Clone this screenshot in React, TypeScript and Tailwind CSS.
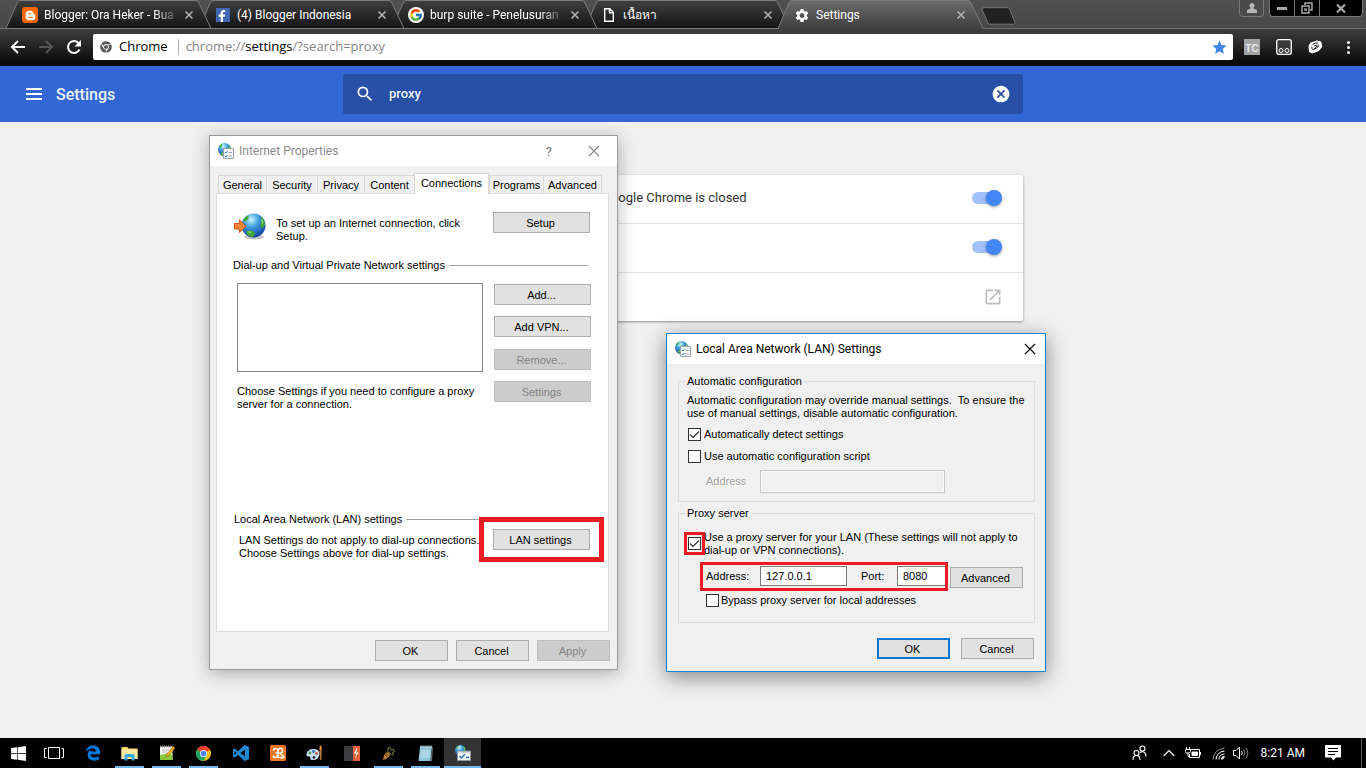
import type { ReactNode } from "react";
import { FaBloggerB, FaChrome, FaEdgeLegacy, FaFacebookF, FaWindows } from "react-icons/fa";
import { FcGoogle } from "react-icons/fc";
import { MdCancel, MdOpenInNew, MdSearch, MdSettings, MdStar } from "react-icons/md";
import { SiXampp } from "react-icons/si";

const uiFont = "font-['Liberation_Sans',Arial,sans-serif]";
const titleFont = "font-['Roboto','Noto_Sans',sans-serif]";

/* ---------- browser tabs ---------- */

function CloseGlyph() {
  return (
    <svg width="8" height="8" viewBox="0 0 8 8" stroke="#b4b4b4" strokeWidth="1.500">
      <path d="M.5 .5l7 7M7.500 .5l-7 7" />
    </svg>
  );
}

type TabProps = { icon: ReactNode; title: string; active?: boolean; order: string; fade?: boolean };

function BrowserTab({ icon, title, active, order, fade }: TabProps) {
  return (
    <div className={`relative flex h-7 w-[205px] shrink-0 items-center pt-0.5 pl-4 -mr-3 ${order}`}>
      <svg className="absolute inset-0" width="205" height="29" viewBox="0 0 205 29">
        <defs>
          <linearGradient id="tabIdle" x1="0" y1="0" x2="0" y2="1">
            <stop offset="0" stopColor="#404040" />
            <stop offset="1" stopColor="#131313" />
          </linearGradient>
          <linearGradient id="tabActive" x1="0" y1="0" x2="0" y2="1">
            <stop offset="0" stopColor="#6c6c6c" />
            <stop offset="1" stopColor="#3e3e3e" />
          </linearGradient>
        </defs>
        <path d="M0 29L11 3Q12 .5 14 .5H190Q192 .5 193 3L205 29Z" fill={active ? "url(#tabActive)" : "url(#tabIdle)"} />
        <path
          d={active ? "M0 28.5L11 3Q12 .5 14 .5H190Q192 .5 193 3L205 28.5" : "M0 28.5L11 3Q12 .5 14 .5H190Q192 .5 193 3L205 28.5Z"}
          fill="none"
          stroke="#7d7d7d"
        />
      </svg>
      <span className="relative flex w-4 shrink-0 justify-center">{icon}</span>
      <span
        className={`relative ml-1.5 w-[137px] overflow-hidden whitespace-nowrap text-xs text-white ${titleFont} ${
          fade ? "[mask-image:linear-gradient(to_right,black_80%,transparent)]" : ""
        }`}
      >
        {title}
      </span>
      <button aria-label={`Close ${title}`} className="relative ml-1">
        <CloseGlyph />
      </button>
    </div>
  );
}

function TabStrip() {
  return (
    <div className="flex h-7 items-start bg-gradient-to-b from-[#505050] to-[#484848] pl-1.5">
      <BrowserTab
        order="z-40"
        fade
        title="Blogger: Ora Heker - Bua"
        icon={
          <span className="flex size-4 items-center justify-center rounded-[3px] bg-[#ff6600] text-white">
            <FaBloggerB size={11} />
          </span>
        }
      />
      <BrowserTab
        order="z-30"
        title="(4) Blogger Indonesia"
        icon={
          <span className="flex size-3.5 items-end justify-end bg-[#4267b2] pr-0.5 text-white">
            <FaFacebookF size={12} />
          </span>
        }
      />
      <BrowserTab
        order="z-20"
        fade
        title="burp suite - Penelusuran"
        icon={
          <span className="flex size-4 items-center justify-center rounded-full bg-white">
            <FcGoogle size={14} />
          </span>
        }
      />
      <BrowserTab
        order="z-10"
        title="เนื้อหา"
        icon={
          <svg width="10" height="14" viewBox="0 0 10 14" fill="none" stroke="white" strokeWidth="1.4">
            <path d="M.7.7h5l3.6 3.6v9H.7zM5.5.7v4h3.8" />
          </svg>
        }
      />
      <BrowserTab order="z-50" active title="Settings" icon={<MdSettings size={17} className="text-white" />} />
      <button aria-label="New tab" className="relative mt-[7px] ml-2.5">
        <svg width="35" height="18" viewBox="0 0 35 18">
          <path d="M3 .7H26.500Q28 .7 28.600 2L34 15.500Q34.300 17.200 32.500 17.200H9Q7.500 17.200 7 16L1 2.500Q.7 .7 3 .7Z" fill="#222" stroke="#757575" />
        </svg>
      </button>
      <div className="mr-[3px] ml-auto flex items-start gap-[5px]">
        <button aria-label="Profile" className="flex h-[17px] w-[25px] items-center justify-center rounded-b border border-t-0 border-[#777] bg-[#4a4a4a]">
          <svg width="10" height="10" viewBox="0 0 10 10" fill="#b5b5b5">
            <path d="M5 0a2.500 2.500 0 0 1 1.500 4.500V5.500L10 7v3H0V7l3.500-1.500v-1A2.500 2.500 0 0 1 5 0z" />
          </svg>
        </button>
        <div className="flex h-[17px] divide-x divide-[#777] rounded-b border border-t-0 border-[#777] bg-black text-[#a8a8a8]">
          <button aria-label="Minimize" className="flex w-[25px] items-center justify-center">
            <span className="h-[3px] w-2.5 bg-[#a8a8a8]" />
          </button>
          <button aria-label="Restore" className="flex w-[25px] items-center justify-center">
            <svg width="12" height="12" viewBox="0 0 12 12" fill="none" stroke="#a8a8a8" strokeWidth="1.500">
              <path d="M4 3V1h7v7H9" />
              <path d="M1 4h7v7H1zM4 7h1v1H4z" />
            </svg>
          </button>
          <button aria-label="Close window" className="flex w-[42px] items-center justify-center">
            <svg width="10" height="9" viewBox="0 0 10 9" stroke="#a8a8a8" strokeWidth="2.200">
              <path d="M1 .5l8 8M9 .5l-8 8" />
            </svg>
          </button>
        </div>
      </div>
    </div>
  );
}

function Toolbar() {
  return (
    <div className="flex h-[38px] items-start border-t border-[#6e6e6e] bg-gradient-to-b from-[#3f3f3f] via-[#222] via-50% to-[#060606] pt-[5px] pl-2.5">
      <div className="flex h-[26px] w-[83px] items-center gap-3 text-white">
        <button aria-label="Back">
          <svg width="16" height="14" viewBox="0 0 16 14" fill="none" stroke="white" strokeWidth="2">
            <path d="M15 7H2.500M8 1L2 7l6 6" />
          </svg>
        </button>
        <button aria-label="Forward">
          <svg width="16" height="14" viewBox="0 0 16 14" fill="none" stroke="#555" strokeWidth="2">
            <path d="M1 7h12.500M8 1l6 6-6 6" />
          </svg>
        </button>
        <button aria-label="Reload">
          <svg width="16" height="16" viewBox="0 0 16 16">
            <path d="M13.500 10.500A6 6 0 1 1 12.500 4" fill="none" stroke="white" strokeWidth="2" />
            <path d="M15 1v6.500H8.500z" fill="white" />
          </svg>
        </button>
      </div>
      <div className="flex h-[26px] flex-1 items-center rounded-[2px] bg-white pr-[5px] pl-[7px] text-[13px] font-['Open_Sans','Noto_Sans',sans-serif]">
        <FaChrome size={12} className="text-[#5a5a5a]" />
        <span className="ml-[7px] text-black">Chrome</span>
        <span className="mr-[7px] ml-2.5 h-4 w-px bg-[#aaa]" />
        <span className="flex-1 text-[#858585]">
          chrome://<span className="text-black">settings</span>/?search=proxy
        </span>
        <button aria-label="Bookmark">
          <MdStar size={17} className="text-[#4285f4]" />
        </button>
      </div>
      <div className="flex h-[26px] w-[133px] items-center pl-[11px]">
        <button aria-label="TC extension" className="flex h-4 w-4 items-end justify-center bg-[#a3a3a3] text-[10px] leading-3 font-bold text-[#e6e6e6] font-['Liberation_Sans',sans-serif]">
          TC
        </button>
        <button aria-label="Panel extension" className="ml-4">
          <svg width="16" height="16" viewBox="0 0 16 16" fill="none" stroke="white">
            <rect x=".7" y=".7" width="14.600" height="14.600" rx="2" fill="#3a3a3a" strokeWidth="1.300" />
            <circle cx="5" cy="11.500" r="2" />
            <circle cx="11" cy="11.500" r="2" />
          </svg>
        </button>
        <button aria-label="Cookie extension" className="ml-4">
          <svg width="15" height="14" viewBox="0 0 15 14">
            <path d="M2.500 2.500L9 .5l4 1 1.500 5L11 11l-6.500 2.500L1 12 .5 6z" fill="white" />
            <path d="M4.500 4.500Q7 2.500 10 3M10.500 5L6 9M4 6.500Q3 9 5 9.500 9 9 11 5.500M6 6l3-1" fill="none" stroke="#222" />
          </svg>
        </button>
        <button aria-label="Menu" className="ml-6 flex flex-col gap-0.5">
          <span className="size-[3px] rounded-full bg-white" />
          <span className="size-[3px] rounded-full bg-white" />
          <span className="size-[3px] rounded-full bg-white" />
        </button>
      </div>
    </div>
  );
}

/* ---------- settings page ---------- */

function SettingsHeader() {
  return (
    <header className="grid h-14 grid-cols-[1fr_680px_1fr] items-center bg-[#3367d6] font-['Roboto',sans-serif] text-white">
      <div className="flex items-center pl-[26px]">
        <button aria-label="Main menu">
          <svg width="16" height="12" viewBox="0 0 16 12" stroke="white" strokeWidth="2">
            <path d="M0 1h16M0 6h16M0 11h16" />
          </svg>
        </button>
        <h1 className="ml-3.5 pt-0.5 text-base font-medium text-white/90">Settings</h1>
      </div>
      <div className="flex h-10 items-center rounded-[2px] bg-[#2850a7] pr-3 pl-3">
        <MdSearch size={20} />
        <input aria-label="Search settings" defaultValue="proxy" className="ml-3.5 flex-1 bg-transparent text-[13px] font-medium text-white/95 outline-none" />
        <button aria-label="Clear search">
          <MdCancel size={20} />
        </button>
      </div>
    </header>
  );
}

function ToggleRow({ id, label }: { id: string; label: string }) {
  return (
    <div className="flex h-[49px] items-center justify-between border-b border-[#e4e4e4] pr-[21px] pb-0.5 pl-5">
      <label htmlFor={id}>{label}</label>
      <span className="relative flex h-4 w-[30px] items-center">
        <input id={id} type="checkbox" role="switch" defaultChecked className="h-3 w-7 appearance-none rounded-full bg-[#a0c1fa]" />
        <span className="pointer-events-none absolute right-0 size-4 rounded-full bg-[#4285f4] shadow-[0_1px_3px_rgba(0,0,0,0.4)]" />
      </span>
    </div>
  );
}

function SystemCard() {
  return (
    <section className="mx-auto w-[680px] rounded-[2px] bg-white text-[13px] text-[#333] shadow-[0_1px_3px_rgba(0,0,0,0.4)] font-['Roboto',sans-serif]">
      <ToggleRow id="background-apps" label="Continue running background apps when Google Chrome is closed" />
      <ToggleRow id="hardware-accel" label="Use hardware acceleration when available" />
      <div className="flex h-12 items-center justify-between pr-5 pl-5">
        <span>Open proxy settings</span>
        <button aria-label="Open proxy settings">
          <MdOpenInNew size={20} className="text-[#bdbdbd]" />
        </button>
      </div>
    </section>
  );
}

/* ---------- dialogs ---------- */

function Globe({ id }: { id: string }) {
  return (
    <g>
      <radialGradient id={id} cx=".4" cy=".25" r=".8">
        <stop offset="0" stopColor="#c8f1fb" />
        <stop offset=".4" stopColor="#3f9fdc" />
        <stop offset="1" stopColor="#12379c" />
      </radialGradient>
      <circle cx="12" cy="12" r="12" fill={`url(#${id})`} />
      <path d="M2 7Q3 3 7 2L7 5 4 8zM19 3q4 3 4.500 8L21 15l-2-3 1-4zM5 18l5-1 4 3-3 3.500Q7 23 5 20z" fill="#43a832" />
      <path d="M20 5l2 4-1 2-1-3zM6 18l4 0-1 2z" fill="#93dc5a" />
    </g>
  );
}

function InternetIcon({ id }: { id: string }) {
  return (
    <svg width="16" height="16" viewBox="0 0 16 16">
      <g transform="scale(.55)">
        <Globe id={id} />
      </g>
      <rect x="5.500" y="5.500" width="10" height="10" rx=".5" fill="#f4f6f8" stroke="#9aa4ad" />
      <path d="M7 9l1 1 1.500-2M7 13l1 1 1.500-2" fill="none" stroke="#2787c9" />
      <path d="M10.500 9.500h3.500M10.500 13h3.500" stroke="#9aa4ad" />
    </svg>
  );
}

function ConnectionIcon() {
  return (
    <svg width="32" height="27" viewBox="0 0 32 27" className="mt-px">
      <ellipse cx="20" cy="24" rx="10" ry="2.500" fill="#c9c9c9" />
      <g transform="translate(7.500 .5)">
        <Globe id="globeLarge" />
      </g>
      <path d="M.5 10.500H5.500V7L12 13 5.500 19.500V16H.5z" fill="#f58634" stroke="#c8551b" />
    </svg>
  );
}

function CloseIcon({ color }: { color: string }) {
  return (
    <svg width="12" height="12" viewBox="0 0 12 12" stroke={color} strokeWidth="1.100">
      <path d="M1 1l10 10M11 1L1 11" />
    </svg>
  );
}

type WinButtonProps = { children: ReactNode; width: string; disabled?: boolean; primary?: boolean };

function WinButton({ children, width, disabled, primary }: WinButtonProps) {
  const look = disabled
    ? "border border-[#bfbfbf] bg-[#cccccc] text-[#838383]"
    : primary
      ? "border-2 border-[#0078d7] bg-[#e1e1e1] text-black"
      : "border border-[#adadad] bg-[#e1e1e1] text-black";
  return (
    <button disabled={disabled} className={`flex h-[21px] shrink-0 items-center justify-center pt-0.5 pr-0.5 leading-[13px] ${width} ${look}`}>
      {children}
    </button>
  );
}

function Checkbox({ id, checked }: { id: string; checked?: boolean }) {
  return (
    <span className="grid size-[13px] shrink-0 place-items-center">
      <input
        id={id}
        type="checkbox"
        defaultChecked={checked}
        className="peer col-start-1 row-start-1 size-[13px] appearance-none border border-[#333] bg-white"
      />
      <svg
        className="pointer-events-none invisible col-start-1 row-start-1 peer-checked:visible"
        width="11"
        height="11"
        viewBox="0 0 11 11"
        fill="none"
        stroke="#333"
        strokeWidth="1.200"
      >
        <path d="M1 5.500L4 8.500L10 2.500" />
      </svg>
    </span>
  );
}

function Marker({ className }: { className: string }) {
  return <span aria-hidden="true" className={`pointer-events-none absolute border-[#ed1c24] ${className}`} />;
}

const propertyTabs = [
  { name: "General", width: "w-12" },
  { name: "Security", width: "w-[51px]" },
  { name: "Privacy", width: "w-[47px]" },
  { name: "Content", width: "w-[50px]" },
  { name: "Connections", width: "w-[75px]" },
  { name: "Programs", width: "w-[54px]" },
  { name: "Advanced", width: "w-[59px]" },
];

function InternetProperties() {
  return (
    <div
      role="dialog"
      aria-label="Internet Properties"
      className={`absolute top-[135px] left-[209px] w-[409px] border border-[#9a9a9a] bg-[#f0f0f0] text-[11px] leading-[13px] text-black shadow-[0_3px_16px_rgba(0,0,0,0.3)] ${uiFont}`}
    >
      <div className="flex h-[30px] items-center bg-white pr-[17px] pl-2">
        <InternetIcon id="globeA" />
        <span className={`ml-[5px] flex-1 text-xs text-[#8c8c8c] ${titleFont}`}>Internet Properties</span>
        <button aria-label="Help" className={`mr-9 text-[13px] text-[#777] ${titleFont}`}>
          ?
        </button>
        <button aria-label="Close">
          <CloseIcon color="#888" />
        </button>
      </div>
      <div role="tablist" className="flex h-[27px] items-end pl-2">
        {propertyTabs.map((tab) => {
          const active = tab.name === "Connections";
          return (
            <button
              key={tab.name}
              role="tab"
              aria-selected={active}
              className={`flex items-center justify-center whitespace-nowrap border-t border-l border-[#d9d9d9] last:border-r ${tab.width} ${
                active ? "relative z-10 -mb-px h-[21px] border-r bg-white pb-0.5" : "h-[18px] pt-0.5"
              }`}
            >
              {tab.name}
            </button>
          );
        })}
      </div>
      <div className="mr-2 ml-1.5 border border-[#dcdcdc] bg-white pt-[18px] pr-[17px] pb-[71px] pl-4">
        <div className="flex h-8 items-start px-px">
          <ConnectionIcon />
          <p className="mt-[5px] ml-2.5 flex-1 pr-4">To set up an Internet connection, click Setup.</p>
          <WinButton width="w-[97px]">Setup</WinButton>
        </div>
        <div className="mt-[15px] mr-[3px] flex items-center gap-1">
          <h2>Dial-up and Virtual Private Network settings</h2>
          <span className="h-px flex-1 bg-[#a0a0a0]" />
        </div>
        <div className="mt-[11px] flex justify-between pl-1">
          <div>
            <div role="listbox" aria-label="Connections" className="h-[89px] w-[246px] border border-[#828790] bg-white" />
            <p className="mt-[13px] w-[246px]">Choose Settings if you need to configure a proxy server for a connection.</p>
          </div>
          <div className="mt-px flex flex-col gap-3">
            <div className="flex flex-col gap-[11px]">
              <WinButton width="w-[97px]">Add...</WinButton>
              <WinButton width="w-[97px]">Add VPN...</WinButton>
            </div>
            <div className="flex flex-col gap-[11px]">
              <WinButton width="w-[97px]" disabled>
                Remove...
              </WinButton>
              <WinButton width="w-[97px]" disabled>
                Settings
              </WinButton>
            </div>
          </div>
        </div>
        <div className="mt-[102px] mr-[3px] flex items-center gap-1 pl-px">
          <h2>Local Area Network (LAN) settings</h2>
          <span className="h-px flex-1 bg-[#a0a0a0]" />
        </div>
        <div className="mt-[3px] flex items-start justify-between pr-px pl-1.5">
          <p className="mt-[5px] whitespace-nowrap">
            LAN Settings do not apply to dial-up connections.
            <br />
            Choose Settings above for dial-up settings.
          </p>
          <div className="relative">
            <WinButton width="w-[97px]">LAN settings</WinButton>
            <Marker className="-inset-x-3.5 -inset-y-3 border-5" />
          </div>
        </div>
      </div>
      <div className="flex justify-end gap-2 py-2 pr-[7px]">
        <WinButton width="w-[73px]">OK</WinButton>
        <WinButton width="w-[73px]">Cancel</WinButton>
        <WinButton width="w-[73px]" disabled>
          Apply
        </WinButton>
      </div>
    </div>
  );
}

function LanSettings() {
  return (
    <div
      role="dialog"
      aria-label="Local Area Network (LAN) Settings"
      className={`absolute top-[333px] left-[666px] w-[380px] border border-[#1883d7] bg-[#f0f0f0] text-[11px] leading-[13px] text-black shadow-[0_5px_20px_rgba(0,0,0,0.45)] ${uiFont}`}
    >
      <div className="flex h-[30px] items-center bg-white pr-[9px] pl-2">
        <InternetIcon id="globeB" />
        <span className={`ml-[5px] flex-1 text-xs ${titleFont}`}>Local Area Network (LAN) Settings</span>
        <button aria-label="Close">
          <CloseIcon color="#000" />
        </button>
      </div>
      <div className="pt-[11px] pr-2.5 pb-3 pl-[11px]">
        <fieldset className="border border-[#dcdcdc] pr-1 pb-2 pl-2">
          <legend className="-ml-0.5 px-0.5">Automatic configuration</legend>
          <p className="mt-1.5">
            Automatic configuration may override manual settings. &nbsp;To ensure the use of manual settings, disable automatic configuration.
          </p>
          <div className="mt-2 flex gap-[3px] pl-px">
            <Checkbox id="auto-detect" checked />
            <label htmlFor="auto-detect">Automatically detect settings</label>
          </div>
          <div className="mt-[9px] flex gap-[3px] pl-px">
            <Checkbox id="auto-script" />
            <label htmlFor="auto-script">Use automatic configuration script</label>
          </div>
          <div className="mt-[7px] flex items-center pl-[19px]">
            <label htmlFor="script-address" className="w-[54px] text-[#a0a0a0] [text-shadow:1px_1px_0_white]">
              Address
            </label>
            <input id="script-address" disabled className="h-[23px] w-[185px] border border-[#c6c6c6] bg-[#f0f0f0] shadow-[inset_0_0_0_1px_#fafafa]" />
          </div>
        </fieldset>
        <fieldset className="mt-[5px] border border-[#dcdcdc] pr-2 pb-[15px] pl-2">
          <legend className="-ml-0.5 px-0.5">Proxy server</legend>
          <div className="mt-[11px] flex items-start gap-[3px] pl-px">
            <span className="relative z-10 mt-1.5 flex">
              <Checkbox id="use-proxy" checked />
              <Marker className="-inset-x-1 -inset-y-[5px] border-3" />
            </span>
            <label htmlFor="use-proxy">
              Use a proxy server for your LAN (These settings will not apply to dial-up or VPN connections).
            </label>
          </div>
          <div className="mt-[9px] flex items-start gap-1 pl-[19px]">
            <div className="relative flex items-center">
              <label htmlFor="proxy-address" className="w-[54px]">
                Address:
              </label>
              <input id="proxy-address" defaultValue="127.0.0.1" className="h-5 w-[87px] border border-[#7a7a7a] bg-white px-[5px]" />
              <label htmlFor="proxy-port" className="w-[50px] pl-3.5">
                Port:
              </label>
              <input id="proxy-port" defaultValue="8080" className="h-5 w-[49px] border border-[#7a7a7a] bg-white px-[5px]" />
              <Marker className="-top-1 -right-0.5 -bottom-[5px] -left-1.5 border-3" />
            </div>
            <div className="mt-px">
              <WinButton width="w-[73px]">Advanced</WinButton>
            </div>
          </div>
          <div className="mt-1.5 flex gap-0.5 pl-[19px]">
            <Checkbox id="bypass" />
            <label htmlFor="bypass">Bypass proxy server for local addresses</label>
          </div>
        </fieldset>
        <div className="mt-[15px] flex justify-end gap-[11px] pr-px">
          <WinButton width="w-[73px]" primary>
            OK
          </WinButton>
          <WinButton width="w-[73px]">Cancel</WinButton>
        </div>
      </div>
    </div>
  );
}

/* ---------- taskbar ---------- */

const taskbarApps: { name: string; open?: boolean; current?: boolean; icon: ReactNode }[] = [
  { name: "Edge", icon: <FaEdgeLegacy size={16} className="text-[#0078d7]" /> },
  {
    name: "File Explorer",
    open: true,
    icon: (
      <svg width="17" height="15" viewBox="0 0 17 15">
        <path d="M.5 1h6l1 1.500h9V13H.5z" fill="#f8d775" />
        <path d="M.5 3.500h16V13H.5z" fill="#fce8a0" />
        <path d="M3.500 14.500V9.500Q3.500 8 5 8h7q1.500 0 1.500 1.500v5h-3V11h-4v3.500z" fill="#35a7e0" />
      </svg>
    ),
  },
  {
    name: "Notepad++",
    open: true,
    icon: (
      <svg width="16" height="16" viewBox="0 0 16 16">
        <path d="M1 1.500h12.500V15H1z" fill="#f2f2ee" />
        <path d="M1 10l5-1 3-1 4.500 2v5H1z" fill="#86c836" />
        <path d="M1 1.500h12.500" stroke="#999" strokeWidth="2" strokeDasharray="1 1" />
        <path d="M3 5h7M3 7h5" stroke="#bbb" />
        <path d="M7 12l1-3 6-7.500 2 1.500L9.500 11z" fill="#f4b62b" stroke="#9b5b15" strokeWidth=".6" />
      </svg>
    ),
  },
  {
    name: "Chrome",
    open: true,
    icon: (
      <svg width="15" height="15" viewBox="0 0 24 24">
        <circle cx="12" cy="12" r="12" fill="#fbc116" />
        <path d="M12 12L1.600 6A12 12 0 0 1 22.400 6z" fill="#e33b2e" />
        <path d="M12 12L1.600 6A12 12 0 0 0 12 24L17 15z" fill="#1ea362" />
        <path d="M12 6.500h10.700a12 12 0 0 0-.3-.5L12 6z" fill="#e33b2e" />
        <circle cx="12" cy="12" r="5.600" fill="white" />
        <circle cx="12" cy="12" r="4.400" fill="#4285f4" />
      </svg>
    ),
  },
  {
    name: "Visual Studio Code",
    icon: (
      <svg width="16" height="16" viewBox="0 0 16 16" fill="#1f8ad2">
        <path d="M11.500 0L16 2v12l-4.500 2L5 9.800 1.800 12.500 0 11.500v-7l1.800-1L5 6.200zM12 4.500L7.500 8l4.500 3.500zM1.500 6v4l2-2z" fillRule="evenodd" />
      </svg>
    ),
  },
  {
    name: "XAMPP",
    icon: (
      <svg width="16" height="16" viewBox="0 0 16 16">
        <rect width="16" height="16" rx="1.500" fill="#f37623" />
        <path
          d="M3.500 5.500Q3.500 3.500 5.500 3.500T8 5.500v5Q8 12.500 5.500 12.500T3.500 10.500M8 6Q8 3.500 10.500 3.500T12.500 6 10.500 8 12.500 10.500 10.500 12.500 8 10.500M5.500 8h5"
          fill="none"
          stroke="white"
          strokeWidth="1.600"
        />
      </svg>
    ),
  },
  {
    name: "Paint",
    open: true,
    icon: (
      <svg width="17" height="17" viewBox="0 0 17 17">
        <path d="M7 4Q14 4 13.500 9.500 12 15.500 6 15q-2.500-.5-1.500-2.500 0-1.500-2-1Q0 11.500.5 8.500 2 4 7 4z" fill="#c9dfee" />
        <circle cx="4" cy="8" r="1.400" fill="#4aa53a" />
        <circle cx="7.500" cy="6.500" r="1.400" fill="#2c6fc1" />
        <circle cx="10.500" cy="8.500" r="1.300" fill="#d63b2b" />
        <circle cx="8" cy="12.500" r="1.400" fill="#333" />
        <path d="M13.500 5.500V2l1-2 1.200 2v3.500z" fill="#e8923c" />
        <path d="M13.500 5.500h2.300L15.300 15h-1.200z" fill="#b9793f" />
      </svg>
    ),
  },
  {
    name: "Burp Suite",
    icon: (
      <svg width="16" height="15" viewBox="0 0 16 15">
        <path d="M0 0h9v15H0z" fill="#3d3d3f" />
        <path d="M9 0h7v15H9z" fill="#e8623d" />
        <path d="M12.500 2.500L10 7.500h2.500L11 12.500l3.500-6H12L13.500 2.500z" fill="white" />
      </svg>
    ),
  },
  {
    name: "Carrot",
    open: true,
    icon: (
      <svg width="13" height="15" viewBox="0 0 13 15">
        <path d="M1 14Q1.500 8.500 4 6.500q2.500-1 4 1 .5 2-2 4T1 14z" fill="#bb7a3a" />
        <path d="M3 9l2 1M4 7.500l2 2" stroke="#5d3510" />
        <path d="M6 6.500L6 2l2-1 1 3 3-.5.5 2-2.500 1 2 1.500-2 1.500L8 7z" fill="none" stroke="#77764f" />
      </svg>
    ),
  },
  {
    name: "Notepad",
    open: true,
    icon: (
      <svg width="15" height="17" viewBox="0 0 15 17">
        <path d="M2 1.500h12L12.500 16H.5z" fill="#8cc5d8" />
        <path d="M3 6h9.500M3 8h9M2.500 10h9M2.500 12h9" stroke="#c9e6ef" />
        <path d="M14 1.500L12.500 16h1.500L15 3z" fill="#5b6c74" />
        <path d="M2.500 1.500H14" stroke="#e8e8e8" strokeWidth="2" strokeDasharray="1 1" />
      </svg>
    ),
  },
  {
    name: "Internet Properties",
    current: true,
    icon: (
      <svg width="16" height="16" viewBox="0 0 16 16">
        <g transform="scale(.45)">
          <Globe id="globeTask" />
        </g>
        <path d="M2.500 6h13v9.500h-13z" fill="#f3f6f9" stroke="#8e9aa3" strokeWidth=".8" />
        <path d="M2.500 6h13v1.500h-13z" fill="#aab6bf" />
        <path d="M4.500 11l2 2 3.500-4M11 12.500h3" fill="none" stroke="#2a6fb5" strokeWidth="1.300" />
      </svg>
    ),
  },
];

function Taskbar() {
  return (
    <footer className="relative flex h-[30px] items-stretch bg-black text-white">
      <button aria-label="Start" className="flex w-9 items-center justify-center">
        <FaWindows size={17} />
      </button>
      <button aria-label="Task view" className="mr-0.5 flex w-9 items-center justify-center">
        <svg width="20" height="14" viewBox="0 0 20 14" fill="none" stroke="white">
          <path d="M4.500 1.500h11v11h-11zM2.500 2.500h-2v9h2M17.500 2.500h2v9h-2" />
        </svg>
      </button>
      {taskbarApps.map((app) => (
        <button
          key={app.name}
          aria-label={app.name}
          className={`relative flex w-[37px] items-center justify-center ${app.current ? "bg-[#333]" : ""}`}
        >
          {app.icon}
          {(app.open || app.current) && (
            <span className={`absolute bottom-0 h-0.5 bg-[#76b9ed] ${app.current ? "inset-x-0" : "inset-x-1"}`} />
          )}
        </button>
      ))}
      <div className="ml-auto flex items-center">
        <svg width="15" height="16" viewBox="0 0 15 16" fill="none" stroke="white" strokeWidth="1.100">
          <circle cx="10.500" cy="3.500" r="2.500" />
          <circle cx="4.500" cy="8" r="2.500" />
          <path d="M1 15q0-4.500 3.500-4.500T8 15M8 7.500q2-1.500 4-.5 2 1.500 2 4.500" />
        </svg>
        <svg className="ml-4" width="12" height="8" viewBox="0 0 12 8" fill="none" stroke="white" strokeWidth="1.200">
          <path d="M.7 7L6 1.500 11.300 7" />
        </svg>
        <svg className="ml-2.5" width="16" height="12" viewBox="0 0 16 12" fill="none" stroke="white">
          <path d="M1.500 0v2M4.500 0v2M.5 2.500h5v2l-1 1.500h-3l-1-1.500zM3 6v3.500h2" />
          <path d="M6 2.500h8.500v8H4.500V7M15.500 5v3" />
          <path d="M7 5h5.500v3.500H7z" fill="white" />
        </svg>
        <svg className="ml-[11px]" width="13" height="13" viewBox="0 0 13 13" fill="none" stroke="white">
          <path d="M10 12.500a2.500 2.500 0 0 1 2.500-2.500" strokeWidth="2" />
          <path d="M7 12.500Q7 7.500 12.500 7M4 12.500Q4.500 5 12.500 4" />
          <path d="M1 12.500Q1.500 2.500 12.500 1" stroke="#888" />
        </svg>
        <svg className="ml-2" width="16" height="14" viewBox="0 0 16 14" fill="none" stroke="white">
          <path d="M.5 4.500h2.500l3.500-3.500v12L3 9.500H.5z" />
          <path d="M8.500 5q1.500 2 0 4" />
          <path d="M10.500 3.500q3 3.500 0 7M12.800 1.500q4 5.500 0 11" stroke="#888" />
        </svg>
        <time className={`ml-3 text-xs ${titleFont}`}>8:21 AM</time>
        <button aria-label="Notifications" className="mr-5 ml-5">
          <svg width="16" height="16" viewBox="0 0 16 16">
            <path d="M0 0h16v12.500h-5L8.500 15.500 6 12.500H0z" fill="white" />
            <path d="M3 3.500h10M3 6.500h10M3 9.500h7" stroke="black" />
          </svg>
        </button>
        <span className="mr-1 h-[30px] w-px bg-[#555]" />
      </div>
    </footer>
  );
}

export default function App() {
  return (
    <div className="relative flex min-h-screen flex-col overflow-hidden bg-[#f0f0f0]">
      <TabStrip />
      <Toolbar />
      <SettingsHeader />
      <main className="flex-1 pt-[53px]">
        <SystemCard />
      </main>
      <InternetProperties />
      <LanSettings />
      <Taskbar />
    </div>
  );
}
